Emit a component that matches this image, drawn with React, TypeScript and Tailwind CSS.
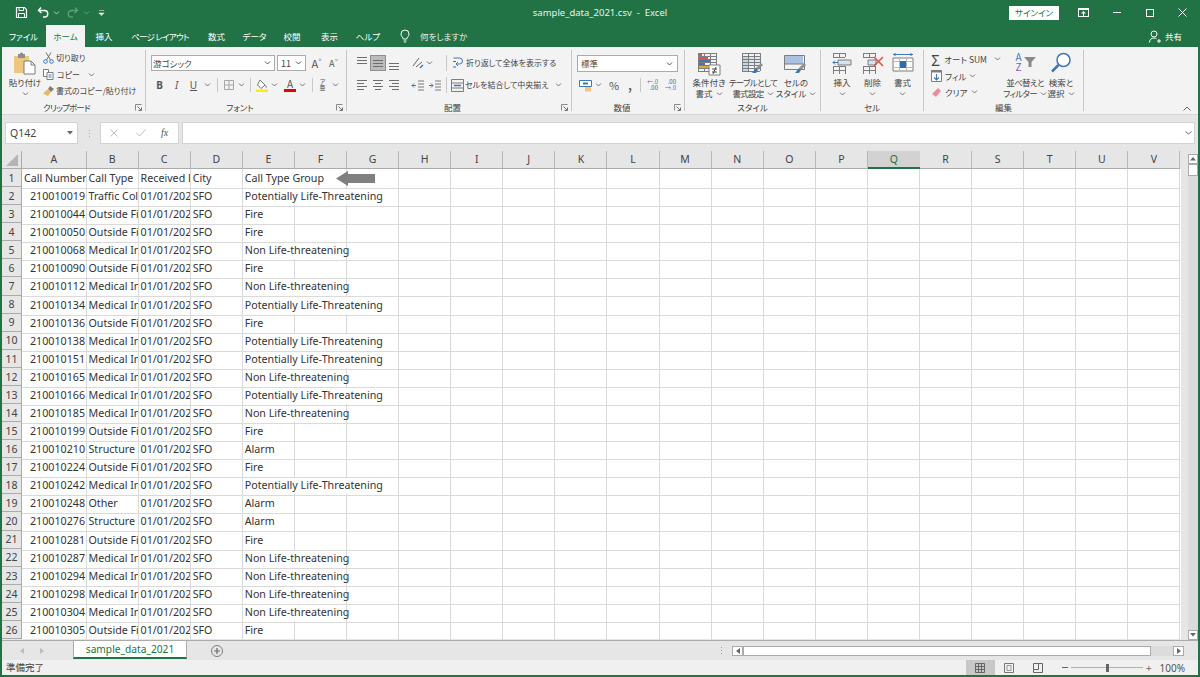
import type { ReactNode } from "react";

const FIRE = "Fire";
const ALARM = "Alarm";
const NON = "Non Life-threatening";
const POT = "Potentially Life-Threatening";

const rows: [string, string, string][] = [
  ["210010019", "Traffic Collision", POT],
  ["210010044", "Outside Fire", FIRE],
  ["210010050", "Outside Fire", FIRE],
  ["210010068", "Medical Incident", NON],
  ["210010090", "Outside Fire", FIRE],
  ["210010112", "Medical Incident", NON],
  ["210010134", "Medical Incident", POT],
  ["210010136", "Outside Fire", FIRE],
  ["210010138", "Medical Incident", POT],
  ["210010151", "Medical Incident", POT],
  ["210010165", "Medical Incident", NON],
  ["210010166", "Medical Incident", POT],
  ["210010185", "Medical Incident", NON],
  ["210010199", "Outside Fire", FIRE],
  ["210010210", "Structure Fire", ALARM],
  ["210010224", "Outside Fire", FIRE],
  ["210010242", "Medical Incident", POT],
  ["210010248", "Other", ALARM],
  ["210010276", "Structure Fire", ALARM],
  ["210010281", "Outside Fire", FIRE],
  ["210010287", "Medical Incident", NON],
  ["210010294", "Medical Incident", NON],
  ["210010298", "Medical Incident", NON],
  ["210010304", "Medical Incident", NON],
  ["210010305", "Outside Fire", FIRE],
];

const columns = "ABCDEFGHIJKLMNOPQRSTUV".split("");
const gridCols = "grid grid-cols-[64.5px_repeat(21,52.1px)]";

function Svg({ w, h, children, className }: { w: number; h: number; children: ReactNode; className?: string }) {
  return (
    <svg width={w} height={h} viewBox={`0 0 ${w} ${h}`} fill="none" className={className}>
      {children}
    </svg>
  );
}

function Caret({ color = "#777" }: { color?: string }) {
  return (
    <Svg w={7} h={4} className="shrink-0">
      <path d="M1 .5 3.5 3 6 .5" stroke={color} />
    </Svg>
  );
}

function Launcher() {
  return (
    <Svg w={7} h={7}>
      <path d="M.5 6.5v-6h6" stroke="#8a8a8a" />
      <path d="M2.5 2.5 6 6M3.5 6.5h3v-3" stroke="#6f6f6f" />
    </Svg>
  );
}

function Sep({ className = "h-[16px]" }: { className?: string }) {
  return <div className={`w-px bg-[#c8c8c8] ${className}`} />;
}

function Lines({ rows: r, y = 2 }: { rows: [number, number][]; y?: number }) {
  return (
    <Svg w={14} h={14}>
      {r.map(([a, b], i) => (
        <path key={i} d={`M${a} ${y + 0.5 + i * 3}H${b}`} stroke="#6e6e6e" />
      ))}
    </Svg>
  );
}

function Group({
  width,
  label,
  labelOffset,
  launcher,
  children,
}: {
  width: string;
  label: string;
  labelOffset?: string;
  launcher?: boolean;
  children: ReactNode;
}) {
  return (
    <div className={`${width} flex h-full shrink-0`}>
      <div className="flex min-w-0 flex-1 flex-col">
        <div className="h-[50px] min-h-0">{children}</div>
        <div className="grid h-[14px] grid-cols-[1fr_auto_1fr] items-center">
          <span />
          <span className={`text-[8.5px] leading-none text-[#444] ${labelOffset ?? ""}`}>{label}</span>
          <span className="flex justify-end pr-[3px]">{launcher ? <Launcher /> : null}</span>
        </div>
      </div>
      <div className="h-[61px] w-px bg-[#c6c6c6]" />
    </div>
  );
}

function BigButton({
  width,
  lines,
  caretInline,
  tight,
  icon,
}: {
  width: string;
  lines: string[];
  caretInline?: boolean;
  tight?: boolean;
  icon: ReactNode;
}) {
  return (
    <div className={`${width} flex shrink-0 flex-col items-center`}>
      <div className="flex h-[27px] items-start justify-center pt-[2px]">{icon}</div>
      {lines.map((l, i) => (
        <div
          key={l}
          className={`flex h-[11px] items-center gap-[3px] whitespace-nowrap text-[8.5px] leading-none text-[#444] ${tight ? "tracking-[-0.7px]" : ""}`}
        >
          {l}
          {caretInline && i === lines.length - 1 ? <Caret /> : null}
        </div>
      ))}
      {!caretInline ? (
        <div className="flex h-[11px] items-center">
          <Caret />
        </div>
      ) : null}
    </div>
  );
}

function SmallTable({ x = 0, y = 0, rows: r = 2, cols = 2, cw = 6, ch = 5 }: { x?: number; y?: number; rows?: number; cols?: number; cw?: number; ch?: number }) {
  const paths: string[] = [];
  for (let i = 0; i <= r; i++) paths.push(`M${x} ${y + i * ch + 0.5}h${cols * cw}`);
  for (let j = 0; j <= cols; j++) paths.push(`M${x + j * cw + 0.5} ${y}v${r * ch}`);
  return <path d={paths.join("")} stroke="#7d7d7d" />;
}

function TitleBar() {
  return (
    <div className="grid h-[25px] shrink-0 grid-cols-[1fr_auto_1fr] items-center bg-[#217346] text-white">
      <div className="flex items-center pl-[15px]">
        <Svg w={13} h={13}>
          <path d="M1.5 1.5h8l2 2v8h-10z" stroke="#fff" strokeWidth="1.2" />
          <path d="M4 1.5v3h4.5v-3M3.5 11.5v-4h6v4" stroke="#fff" />
        </Svg>
        <Svg w={13} h={13} className="ml-[9px]">
          <path d="M4 1.5 1.5 4.5 4.5 7M2 4.5h5.5a3 3 0 0 1 0 6.5H6" stroke="#fff" strokeWidth="1.4" />
        </Svg>
        <span className="ml-[3px]">
          <Caret color="#b6d2c2" />
        </span>
        <Svg w={13} h={13} className="ml-[6px]">
          <path d="M9 1.5 11.5 4.5 8.5 7M11 4.5H5.5a3 3 0 0 0 0 6.5H7" stroke="#5f9c7c" strokeWidth="1.4" />
        </Svg>
        <span className="ml-[4px]">
          <Caret color="#5f9c7c" />
        </span>
        <Svg w={7} h={6} className="ml-[8px]">
          <path d="M1 .5h5M.8 3h5.4L3.5 5.6z" stroke="#dfeae4" fill="#dfeae4" strokeWidth=".6" />
        </Svg>
      </div>
      <div className="font-['Noto_Sans',sans-serif] text-[9.5px] leading-none whitespace-pre text-[#e9f1ec]">sample_data_2021.csv  -  Excel</div>
      <div className="flex items-center justify-end pr-[1px]">
        <div className="flex h-[14px] w-[50px] items-center justify-center bg-white text-[8.5px] leading-none text-[#217346]">サインイン</div>
        <div className="flex w-[41px] justify-center pl-[7px]">
          <Svg w={11} h={9}>
            <rect x=".5" y=".5" width="10" height="8" stroke="#fff" fill="none" />
            <path d="M0 0h11v2H0zM5.5 3 3 5.5h2V8h1V5.5h2z" fill="#fff" />
          </Svg>
        </div>
        <div className="flex w-[33px] justify-center">
          <div className="h-px w-[8px] bg-white" />
        </div>
        <div className="flex w-[33px] justify-center">
          <div className="size-[8px] border border-white" />
        </div>
        <div className="flex w-[33px] justify-center">
          <Svg w={9} h={9}>
            <path d="M.5.5l8 8M8.5.5l-8 8" stroke="#fff" />
          </Svg>
        </div>
      </div>
    </div>
  );
}

function TabStrip() {
  const tab = "flex h-full items-center justify-center text-[8.5px] leading-none text-white shrink-0";
  return (
    <div className="flex h-[22px] shrink-0 items-center bg-[#217346] pl-[1px]">
      <div className={`${tab} w-[45px]`}>ファイル</div>
      <div className="flex h-full w-[39px] shrink-0 items-center justify-center bg-[#f3f3f3] text-[8.5px] leading-none text-[#217346]">ホーム</div>
      <div className={`${tab} w-[38px]`}>挿入</div>
      <div className={`${tab} w-[74px] tracking-[-0.7px]`}>ページ レイアウト</div>
      <div className={`${tab} w-[39px]`}>数式</div>
      <div className={`${tab} w-[37px]`}>データ</div>
      <div className={`${tab} w-[38px]`}>校閲</div>
      <div className={`${tab} w-[37px]`}>表示</div>
      <div className={`${tab} w-[40px]`}>ヘルプ</div>
      <div className="ml-[12px] flex items-center">
        <Svg w={10} h={14}>
          <path d="M3.3 10C3 8.2 1 7.5 1 5a4 4 0 0 1 8 0c0 2.5-2 3.2-2.3 5zM3.5 12h3M4.5 13.5h1" stroke="#fff" />
        </Svg>
        <span className="ml-[10px] text-[8.5px] leading-none text-[#e6efe9]">何をしますか</span>
      </div>
      <div className="ml-auto flex items-center pr-[18px]">
        <Svg w={12} h={13}>
          <circle cx="5" cy="4" r="3" stroke="#fff" />
          <path d="M.5 12.5c0-3 2-4.5 4.5-4.5 1 0 2 .3 2.5.7M8 11h4M10 9v4" stroke="#fff" />
        </Svg>
        <span className="ml-[4px] text-[8.5px] leading-none text-white">共有</span>
      </div>
    </div>
  );
}

function ClipboardGroup() {
  const row = "flex h-[16.5px] items-center whitespace-nowrap text-[8px] leading-none text-[#444]";
  return (
    <Group width="w-[144px]" label="クリップボード" labelOffset="-ml-[14px] tracking-[-0.8px]" launcher>
      <div className="flex h-full pl-[5px]">
        <BigButton
          width="w-[36px]"
          lines={["貼り付け"]}
          icon={
            <Svg w={24} h={24}>
              <path d="M1 4h15v17H1z" fill="#eec77f" />
              <path d="M5 2h2c0-2 3-2 3 0h2v4H5z" fill="#8d8d8d" />
              <path d="M11 9h7l4 4v9H11z" fill="#fff" stroke="#7d7d7d" />
              <path d="M18 9v4h4" stroke="#7d7d7d" />
            </Svg>
          }
        />
        <div className="flex flex-col">
          <div className={row}>
            <Svg w={11} h={12} className="mr-[2px]">
              <circle cx="2.5" cy="9.5" r="1.8" stroke="#3f77b5" />
              <circle cx="8.5" cy="9.5" r="1.8" stroke="#3f77b5" />
              <path d="M3.5 8 8 .5M7.5 8 3 .5" stroke="#6e6e6e" />
            </Svg>
            切り取り
          </div>
          <div className={row}>
            <Svg w={11} h={11} className="mr-[3px]">
              <path d="M.5.5h5v7h-5z" fill="#fff" stroke="#7d7d7d" />
              <path d="M4 3.5h6v7H4z" fill="#fff" stroke="#7d7d7d" />
              <path d="M5.5 6h3M5.5 8h3" stroke="#3f77b5" />
            </Svg>
            コピー
            <span className="ml-[8px]">
              <Caret />
            </span>
          </div>
          <div className={row}>
            <Svg w={12} h={12} className="mr-[1px]">
              <path d="M7 1l4 3-3 3-3-3z" fill="#7c7c7c" />
              <path d="M5 4 8 7 5 11 0 8.5z" fill="#e7b962" />
            </Svg>
            書式のコピー/貼り付け
          </div>
        </div>
      </div>
    </Group>
  );
}

function FontGroup() {
  const letter = "flex w-[17px] shrink-0 justify-center font-['Noto_Sans',sans-serif] text-[10px] leading-none text-[#555]";
  return (
    <Group width="w-[201px]" label="フォント" labelOffset="-ml-[12px]" launcher>
      <div className="pt-[5px] pl-[5px]">
        <div className="flex h-[16px] items-center">
          <div className="flex h-[16px] w-[124px] items-center justify-between border border-[#ababab] bg-white pr-[3px] pl-[1px] text-[8.5px] leading-none text-[#444]">
            游ゴシック
            <Caret color="#555" />
          </div>
          <div className="ml-[2px] flex h-[16px] w-[29px] items-center justify-between border border-[#ababab] bg-white pr-[3px] pl-[3px] text-[9px] leading-none text-[#444]">
            11
            <Caret color="#555" />
          </div>
          <div className="ml-[2px] flex w-[17px] items-start justify-center text-[11px] leading-none text-[#555]">
            A<span className="text-[6px] text-[#3f77b5]">^</span>
          </div>
          <div className="flex w-[17px] items-start justify-center text-[9px] leading-none text-[#555]">
            A<span className="text-[6px] text-[#3f77b5]">ˇ</span>
          </div>
        </div>
        <div className="mt-[6px] flex h-[16px] items-center">
          <div className={`${letter} font-bold`}>B</div>
          <div className={`${letter} italic`}>I</div>
          <div className={`${letter} underline`}>U</div>
          <span className="ml-[2px]">
            <Caret />
          </span>
          <Sep className="ml-[6px] h-[14px]" />
          <Svg w={10} h={10} className="ml-[6px]">
            <path d="M.5.5h9v9h-9zM5 .5v9M.5 5h9" stroke="#a6a6a6" />
          </Svg>
          <span className="ml-[4px]">
            <Caret />
          </span>
          <Sep className="ml-[5px] h-[14px]" />
          <Svg w={12} h={13} className="ml-[5px]">
            <path d="M4 1 9 6 5 9.5 1.5 6z" stroke="#777" fill="#fff" />
            <path d="M9.5 6.5c1 1.2 1 2 .3 2.3" stroke="#3f77b5" />
            <path d="M0 10.5h12V13H0z" fill="#ffee00" />
          </Svg>
          <span className="ml-[3px]">
            <Caret />
          </span>
          <div className="ml-[6px] flex w-[12px] flex-col items-center text-[10px] leading-[10px] text-[#555]">
            A<span className="h-[3px] w-full bg-[#e60000]" />
          </div>
          <span className="ml-[3px]">
            <Caret />
          </span>
          <Sep className="ml-[6px] h-[14px]" />
          <div className="ml-[4px] flex w-[11px] flex-col items-center text-[6px] leading-[6px] text-[#555]">
            <span>ア</span>
            <span>亜</span>
          </div>
          <span className="ml-[4px]">
            <Caret />
          </span>
        </div>
      </div>
    </Group>
  );
}

const TOP: [number, number][] = [
  [2, 12],
  [2, 12],
  [2, 12],
];
const LEFT: [number, number][] = [
  [2, 12],
  [2, 9],
  [2, 12],
  [2, 9],
];
const MID: [number, number][] = [
  [2, 12],
  [4, 10],
  [2, 12],
  [4, 10],
];
const RIGHT: [number, number][] = [
  [2, 12],
  [5, 12],
  [2, 12],
  [5, 12],
];

function AlignGroup() {
  const cell = "flex h-[16px] w-[16px] shrink-0 items-center justify-center";
  const label = "whitespace-nowrap text-[8px] leading-none text-[#444]";
  return (
    <Group width="w-[225px]" label="配置" labelOffset="-ml-[13px]" launcher>
      <div className="pt-[5px] pl-[7px]">
        <div className="flex h-[16px] items-center">
          <div className={cell}>
            <Lines rows={TOP} y={1} />
          </div>
          <div className={`${cell} border border-[#8f8f8f] bg-[#bcbcbc]`}>
            <Lines rows={TOP} y={4} />
          </div>
          <div className={cell}>
            <Lines rows={TOP} y={7} />
          </div>
          <Svg w={14} h={14} className="ml-[9px]">
            <path d="M2 10 8 2M5 11l6-5" stroke="#666" />
            <path d="M9 12l3-3" stroke="#3f77b5" strokeWidth="1.5" />
          </Svg>
          <span className="ml-[1px]">
            <Caret />
          </span>
          <Sep className="ml-[13px] h-[16px]" />
          <Svg w={13} h={14} className="ml-[5px]">
            <path d="M1.5 2h6a3 3 0 0 1 0 6H4" stroke="#3f77b5" />
            <path d="M1 5.5h3M1 11h3" stroke="#666" />
            <path d="M6 6 4 8l2 2" stroke="#3f77b5" />
          </Svg>
          <span className={`ml-[1px] ${label}`}>折り返して全体を表示する</span>
        </div>
        <div className="mt-[6px] flex h-[16px] items-center">
          <div className={cell}>
            <Lines rows={LEFT} />
          </div>
          <div className={cell}>
            <Lines rows={MID} />
          </div>
          <div className={cell}>
            <Lines rows={RIGHT} />
          </div>
          <Svg w={14} h={12} className="ml-[9px]">
            <path d="M7 2h6M7 5h6M7 8h6M7 11h6" stroke="#7d7d7d" />
            <path d="M5 6.5H1M3 4.5 1 6.5l2 2" stroke="#3f77b5" />
          </Svg>
          <Svg w={14} h={12} className="ml-[3px]">
            <path d="M7 2h6M7 5h6M7 8h6M7 11h6" stroke="#7d7d7d" />
            <path d="M1 6.5h4M3 4.5l2 2-2 2" stroke="#3f77b5" />
          </Svg>
          <Sep className="ml-[4px] h-[16px]" />
          <Svg w={13} h={13} className="ml-[4px]">
            <path d="M.5.5h12v12H.5zM.5 4h12M.5 9h12" stroke="#7d7d7d" />
            <path d="M3 6.5h7" stroke="#3f77b5" strokeWidth="1.5" />
          </Svg>
          <span className={`ml-[1px] ${label}`}>セルを結合して中央揃え</span>
          <span className="ml-[6px]">
            <Caret />
          </span>
        </div>
      </div>
    </Group>
  );
}

function NumberGroup() {
  return (
    <Group width="w-[113px]" label="数値" labelOffset="-ml-[12px]" launcher>
      <div className="pt-[5px] pl-[5px]">
        <div className="flex h-[17px] w-[101px] items-center justify-between border border-[#ababab] bg-white pr-[4px] pl-[3px] text-[8.5px] leading-none text-[#444]">
          標準
          <Caret color="#555" />
        </div>
        <div className="mt-[5px] flex h-[16px] items-center">
          <Svg w={13} h={13} className="ml-[2px]">
            <path d="M.5 1.5h12v6H.5z" fill="#fff" stroke="#3f77b5" />
            <path d="M4 4.5h5" stroke="#3f77b5" strokeWidth="2" />
            <path d="M6 8h6v4.5H6z" fill="#eec77f" />
          </Svg>
          <span className="ml-[3px]">
            <Caret />
          </span>
          <span className="ml-[6px] w-[12px] text-center text-[11px] leading-none text-[#555]">%</span>
          <span className="ml-[7px] w-[6px] text-center text-[11px] leading-none font-bold text-[#555]">,</span>
          <Sep className="ml-[7px] h-[14px]" />
          <div className="ml-[5px] flex w-[12px] flex-col items-end text-[6px] leading-[6px] text-[#555]">
            <span className="text-[#3f77b5]">←.0</span>
            <span>.00</span>
          </div>
          <div className="ml-[6px] flex w-[12px] flex-col items-end text-[6px] leading-[6px] text-[#555]">
            <span>.00</span>
            <span className="text-[#3f77b5]">→.0</span>
          </div>
        </div>
      </div>
    </Group>
  );
}

function BrushMark({ x, y }: { x: number; y: number }) {
  return (
    <g transform={`translate(${x} ${y})`}>
      <path d="M9 0l2 2-5 5-2-2z" fill="#8f8f8f" />
      <path d="M4 5l2 2-2 3H0z" fill="#3f77b5" />
    </g>
  );
}

function StyleGroup() {
  return (
    <Group width="w-[136px]" label="スタイル">
      <div className="flex pl-[3px]">
        <BigButton
          width="w-[42px]"
          lines={["条件付き", "書式"]}
          caretInline
          icon={
            <Svg w={24} h={24}>
              <SmallTable x={1} y={1} rows={6} cols={3} cw={6} ch={3} />
              <path d="M2 2h3v2H2zM2 5h9v2H2z" fill="#d9534f" />
              <path d="M2 8h11v2H2zM2 11h6v2H2z" fill="#3f77b5" />
              <path d="M2 14h10v2H2z" fill="#e8a33d" />
              <path d="M12 13h11v10H12z" fill="#fff" stroke="#7d7d7d" />
              <path d="M15 17h5M15 20h5M19 15l-3 7" stroke="#444" />
            </Svg>
          }
        />
        <BigButton
          width="w-[46px]"
          lines={["テーブルとして", "書式設定"]}
          caretInline
          tight
          icon={
            <Svg w={24} h={24}>
              <path d="M1 4h7v15H1z" fill="#c7d5e8" />
              <path d="M8 4h12v10H8z" fill="#dfe7f2" />
              <SmallTable x={1} y={1} rows={6} cols={3} cw={6} ch={3} />
              <BrushMark x={11} y={11} />
            </Svg>
          }
        />
        <BigButton
          width="w-[36px] ml-[2px]"
          lines={["セルの", "スタイル"]}
          caretInline
          icon={
            <Svg w={24} h={24}>
              <path d="M1 4h18v8H1z" fill="#a9c2e3" />
              <path d="M.5 3.5h20v14H.5z" stroke="#7d7d7d" />
              <path d="M.5 12h20" stroke="#7d7d7d" />
              <BrushMark x={11} y={11} />
            </Svg>
          }
        />
      </div>
    </Group>
  );
}

function CellGroup() {
  return (
    <Group width="w-[103px]" label="セル">
      <div className="flex pl-[6px]">
        <BigButton
          width="w-[30px]"
          lines={["挿入"]}
          icon={
            <Svg w={20} h={22}>
              <SmallTable x={1} y={1} rows={1} cols={2} cw={6} ch={4} />
              <path d="M6 8h13v5H6z" fill="#d7e2f0" stroke="#7d7d7d" />
              <path d="M1 10.5h5M3 8.5l-2 2 2 2" stroke="#3f77b5" />
              <SmallTable x={1} y={14} rows={2} cols={2} cw={6} ch={4} />
            </Svg>
          }
        />
        <BigButton
          width="w-[31px]"
          lines={["削除"]}
          icon={
            <Svg w={22} h={22}>
              <SmallTable x={1} y={1} rows={1} cols={2} cw={6} ch={4} />
              <path d="M6 8h8v5H6z" fill="#d7e2f0" stroke="#7d7d7d" />
              <SmallTable x={1} y={14} rows={2} cols={2} cw={6} ch={4} />
              <path d="M12 5l9 9M21 5l-9 9" stroke="#e0503c" strokeWidth="1.5" />
            </Svg>
          }
        />
        <BigButton
          width="w-[29px]"
          lines={["書式"]}
          icon={
            <Svg w={22} h={23}>
              <path d="M1 2.5h20M3 1v3M19 1v3" stroke="#3f77b5" />
              <path d="M1 6h20v13H1z" fill="#fff" stroke="#7d7d7d" />
              <path d="M1 9.5h20M1 15.5h20M7.5 6v14M14.5 6v14" stroke="#b8b8b8" />
              <path d="M8 9h6v7H8z" fill="#2b6cb5" />
            </Svg>
          }
        />
      </div>
    </Group>
  );
}

function EditGroup() {
  const row = "flex h-[16.5px] items-center whitespace-nowrap text-[8.5px] leading-none text-[#444]";
  return (
    <Group width="w-[160px]" label="編集">
      <div className="flex pl-[7px]">
        <div className="flex w-[70px] flex-col pt-[1px]">
          <div className={row}>
            <span className="w-[13px] text-[15px] leading-none text-[#444]">Σ</span>
            <span className="ml-[1px]">オート SUM</span>
            <span className="ml-[7px]">
              <Caret />
            </span>
          </div>
          <div className={row}>
            <Svg w={11} h={12} className="mr-[3px]">
              <path d="M.5.5h10v11H.5z" fill="#fff" stroke="#7d7d7d" />
              <path d="M.5.5h10v2H.5z" fill="#7d7d7d" />
              <path d="M5.5 4v6M3 7.5l2.5 2.5L8 7.5" stroke="#3f77b5" strokeWidth="1.2" />
            </Svg>
            フィル
            <span className="ml-[3px]">
              <Caret />
            </span>
          </div>
          <div className={row}>
            <Svg w={11} h={11} className="mr-[3px]">
              <path d="M7 1l3 3-5 6-4-3z" fill="#ec8d9c" />
            </Svg>
            クリア
            <span className="ml-[3px]">
              <Caret />
            </span>
          </div>
        </div>
        <BigButton
          width="w-[38px] ml-[5px]"
          lines={["並べ替えと", "フィルター"]}
          caretInline
          tight
          icon={
            <div className="flex items-center">
              <div className="flex w-[9px] flex-col items-center text-[10px] leading-[10px]">
                <span className="text-[#3f77b5]">A</span>
                <span className="text-[#8a4fb5]">Z</span>
              </div>
              <Svg w={12} h={10} className="ml-[1px]">
                <path d="M0 0h12L7.5 5v5h-3V5z" fill="#8a8a8a" />
              </Svg>
            </div>
          }
        />
        <BigButton
          width="w-[30px] ml-[2px]"
          lines={["検索と", "選択"]}
          caretInline
          icon={
            <Svg w={22} h={22}>
              <circle cx="13.5" cy="8" r="6.5" stroke="#3f77b5" strokeWidth="1.5" fill="#fff" />
              <path d="M8.5 13 2 19.5" stroke="#3f77b5" strokeWidth="2.5" />
            </Svg>
          }
        />
      </div>
    </Group>
  );
}

function Ribbon() {
  return (
    <div className="flex h-[68px] shrink-0 items-stretch border-b border-[#d5d5d5] bg-[#f3f3f3] pt-[3px]">
      <ClipboardGroup />
      <FontGroup />
      <AlignGroup />
      <NumberGroup />
      <StyleGroup />
      <CellGroup />
      <EditGroup />
      <div className="flex flex-1 items-end justify-end pr-[7px] pb-[3px]">
        <Svg w={8} h={5}>
          <path d="M.5 4.5 4 1l3.5 3.5" stroke="#666" />
        </Svg>
      </div>
    </div>
  );
}

function FormulaBar() {
  return (
    <div className="flex h-[36px] shrink-0 items-center bg-[#e6e6e6] pl-[3px] pr-[3px]">
      <div className="flex h-[22px] w-[73px] items-center justify-between border border-[#d2d2d2] bg-white pr-[4px] pl-[4px] font-['Noto_Sans',sans-serif] text-[10.5px] leading-none text-[#444]">
        Q142
        <Svg w={6} h={4}>
          <path d="M0 0h6L3 3.5z" fill="#666" />
        </Svg>
      </div>
      <div className="flex w-[22px] flex-col items-center gap-[2px]">
        <span className="size-[1px] bg-[#aaa]" />
        <span className="size-[1px] bg-[#aaa]" />
        <span className="size-[1px] bg-[#aaa]" />
      </div>
      <div className="flex h-[22px] w-[79px] items-center border border-[#d2d2d2] bg-white">
        <Svg w={8} h={8} className="ml-[9px]">
          <path d="M.5.5l7 7M7.5.5l-7 7" stroke="#bdbdbd" />
        </Svg>
        <Svg w={10} h={8} className="ml-[18px]">
          <path d="M.5 4l3 3L9.5.5" stroke="#bdbdbd" />
        </Svg>
        <span className="ml-[15px] font-['Liberation_Serif',serif] text-[10px] leading-none text-[#555] italic">fx</span>
      </div>
      <div className="ml-[3px] flex h-[22px] flex-1 items-center justify-end border border-[#d2d2d2] bg-white pr-[2px]">
        <Svg w={7} h={4}>
          <path d="M.5.5 3.5 3l3-2.5" stroke="#666" />
        </Svg>
      </div>
    </div>
  );
}

function HeaderRow() {
  return (
    <div className="flex h-[18px] shrink-0 bg-[#e6e6e6]">
      <div className="flex w-[20px] shrink-0 items-end justify-end border-r border-b border-[#ababab] pr-[3px] pb-[2px]">
        <Svg w={12} h={12}>
          <path d="M12 0v12H0z" fill="#b5b5b5" />
        </Svg>
      </div>
      <div className={gridCols}>
        {columns.map((c) =>
          c === "Q" ? (
            <div key={c} className="flex items-center justify-center border-b-2 border-[#217346] bg-[#d2d2d2] text-[10.5px] leading-none text-[#217346]">
              {c}
            </div>
          ) : (
            <div key={c} className="flex items-center justify-center border-r border-b border-r-[#b8b8b8] border-b-[#ababab] text-[10.5px] leading-none text-[#444]">
              {c}
            </div>
          ),
        )}
      </div>
    </div>
  );
}

function textCell(extra: string, children?: ReactNode, key?: string) {
  return (
    <div key={key} className={`border-r border-b border-[#dadada] pr-[0.5px] pl-[2px] whitespace-nowrap ${extra}`}>
      {children}
    </div>
  );
}

function DataRow({ n, cells }: { n: number; cells: [string, string, string, string, string] }) {
  const e = cells[4];
  const span = e.startsWith("Pot") ? 3 : e.startsWith("Non") || e.startsWith("Call") ? 2 : 1;
  const ec = span === 3 ? "col-span-3" : span === 2 ? "col-span-2" : "";
  const rest = columns.length - 4 - span;
  return (
    <div className="flex h-[18.08px]">
      <div className="flex w-[20px] shrink-0 items-center justify-center border-r border-b border-[#ababab] bg-[#e6e6e6] pt-[1px] text-[10.5px] leading-none text-[#444]">
        {n}
      </div>
      <div className={`${gridCols} text-[10.7px] leading-[19px] text-[#333]`}>
        {textCell(`overflow-hidden ${n === 1 ? "" : "text-right"}`, cells[0])}
        {textCell("overflow-hidden", cells[1])}
        {textCell("overflow-hidden", cells[2])}
        {textCell("overflow-hidden", cells[3])}
        {textCell(`overflow-visible ${ec}`, e)}
        {Array.from({ length: rest }, (_, i) => textCell("overflow-hidden", null, String(i)))}
      </div>
    </div>
  );
}

function Sheet() {
  return (
    <div className="relative flex h-[489px] shrink-0 bg-[#e6e6e6] font-['Noto_Sans',sans-serif]">
      <div className="flex-1 overflow-hidden">
        <HeaderRow />
        <div className="w-[1179px] bg-white">
          <DataRow n={1} cells={["Call Number", "Call Type", "Received DtTm", "City", "Call Type Group"]} />
          {rows.map((r, i) => (
            <DataRow key={r[0]} n={i + 2} cells={[r[0], r[1], "01/01/2021 12:00", "SFO", r[2]]} />
          ))}
        </div>
      </div>
      <div className="absolute top-[20px] left-[334px]">
        <Svg w={39} h={15}>
          <path d="M0 7.5 12 0v3h27v9H12v3z" fill="#808080" />
        </Svg>
      </div>
      <div className="flex w-[16px] shrink-0 flex-col items-end pt-[3px]">
        <div className="flex h-[10px] w-[10px] items-center justify-center border border-[#ababab] bg-white">
          <Svg w={6} h={4}>
            <path d="M3 0l3 3.5H0z" fill="#666" />
          </Svg>
        </div>
        <div className="h-[12px] w-[10px] border border-[#ababab] bg-white" />
        <div className="w-[10px] flex-1 bg-[#dcdcdc]" />
        <div className="flex h-[10px] w-[10px] items-center justify-center border border-[#ababab] bg-white">
          <Svg w={6} h={4}>
            <path d="M0 0h6L3 3.5z" fill="#666" />
          </Svg>
        </div>
      </div>
    </div>
  );
}

function SheetTabs() {
  return (
    <div className="flex h-[20px] shrink-0 items-start border-t border-[#ababab] bg-[#e6e6e6]">
      <div className="flex h-full w-[71px] shrink-0 items-center pl-[18px]">
        <Svg w={4} h={6}>
          <path d="M4 0v6L0 3z" fill="#bdbdbd" />
        </Svg>
        <Svg w={4} h={6} className="ml-[16px]">
          <path d="M0 0v6l4-3z" fill="#bdbdbd" />
        </Svg>
      </div>
      <div className="flex h-[18px] w-[114px] items-center justify-center border-x border-b-2 border-x-[#ababab] border-b-[#217346] bg-white font-['Noto_Sans',sans-serif] text-[10.2px] leading-none text-[#217346]">
        sample_data_2021
      </div>
      <div className="ml-[24px] flex h-full items-center">
        <Svg w={12} h={12}>
          <circle cx="6" cy="6" r="5.5" stroke="#7d7d7d" />
          <path d="M6 3v6M3 6h6" stroke="#666" strokeWidth="1.2" />
        </Svg>
      </div>
      <div className="ml-[498px] flex h-full flex-col justify-center gap-[2px]">
        <span className="size-[1px] bg-[#999]" />
        <span className="size-[1px] bg-[#999]" />
        <span className="size-[1px] bg-[#999]" />
      </div>
      <div className="ml-[10px] flex h-full flex-1 items-center pr-[14px]">
        <div className="flex h-[10px] w-[11px] items-center justify-center border border-[#ababab] bg-white">
          <Svg w={4} h={6}>
            <path d="M4 0v6L0 3z" fill="#666" />
          </Svg>
        </div>
        <div className="h-[10px] flex-1 bg-[#dcdcdc]">
          <div className="h-full w-[408px] border border-[#ababab] bg-white" />
        </div>
        <div className="flex h-[10px] w-[11px] items-center justify-center border border-[#ababab] bg-white">
          <Svg w={4} h={6}>
            <path d="M0 0v6l4-3z" fill="#666" />
          </Svg>
        </div>
      </div>
    </div>
  );
}

function StatusBar() {
  return (
    <div className="flex h-[15px] shrink-0 items-center bg-[#f0f0f0] pl-[4px]">
      <span className="text-[9.5px] leading-none text-[#444]">準備完了</span>
      <div className="ml-auto flex h-full items-center pr-[13px]">
        <div className="flex h-full w-[29px] items-center justify-center bg-[#c8c8c8]">
          <Svg w={10} h={10}>
            <path d="M.5.5h9v9h-9zM3.5.5v9M6.5.5v9M.5 3.5h9M.5 6.5h9" stroke="#666" />
          </Svg>
        </div>
        <div className="flex w-[29px] justify-center">
          <Svg w={10} h={10}>
            <path d="M.5.5h9v9h-9z" stroke="#777" />
            <path d="M3 2.5h4v5H3z" stroke="#999" />
          </Svg>
        </div>
        <div className="flex w-[29px] justify-center">
          <Svg w={10} h={10}>
            <path d="M.5.5h9v9h-9zM.5 6.5h5v-6" stroke="#666" />
          </Svg>
        </div>
        <div className="ml-[9px] h-px w-[6px] bg-[#666]" />
        <div className="relative ml-[3px] h-px w-[72px] bg-[#b0b0b0]">
          <div className="absolute top-[-3.5px] left-[35px] h-[8px] w-[3px] bg-[#666]" />
        </div>
        <div className="ml-[3px] text-[10px] leading-none text-[#666]">+</div>
        <span className="ml-[8px] font-['Noto_Sans',sans-serif] text-[10px] leading-none text-[#555]">100%</span>
      </div>
    </div>
  );
}

export default function App() {
  return (
    <div className="flex h-[677px] w-[1200px] flex-col overflow-hidden bg-[#217346] font-['Noto_Sans_CJK_JP','Noto_Sans',sans-serif] [font-feature-settings:'palt']">
      <TitleBar />
      <TabStrip />
      <div className="flex h-[630px] flex-col overflow-hidden border-x-2 border-b-2 border-[#217346]">
        <Ribbon />
        <FormulaBar />
        <Sheet />
        <SheetTabs />
        <StatusBar />
      </div>
    </div>
  );
}
